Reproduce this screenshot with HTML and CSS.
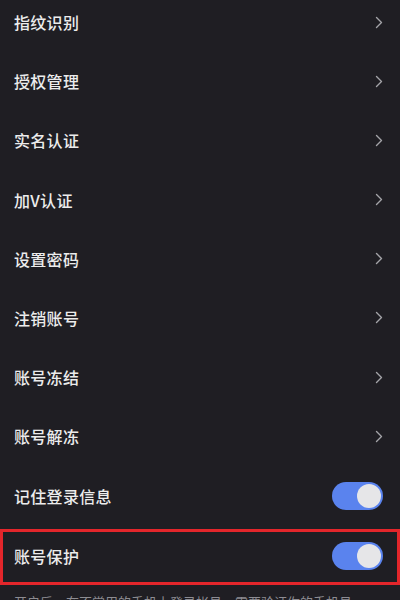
FILE: index.html
```html
<!DOCTYPE html>
<html lang="zh">
<head>
<meta charset="utf-8">
<link rel="stylesheet" href="styles.css">
</head>
<body>
<div class="list">
  <div class="row"><span class="label">指纹识别</span><svg class="chev" viewBox="0 0 8 13"><path d="M1.5 1.5 L6.5 6.5 L1.5 11.5" /></svg></div>
  <div class="row"><span class="label">授权管理</span><svg class="chev" viewBox="0 0 8 13"><path d="M1.5 1.5 L6.5 6.5 L1.5 11.5" /></svg></div>
  <div class="row"><span class="label">实名认证</span><svg class="chev" viewBox="0 0 8 13"><path d="M1.5 1.5 L6.5 6.5 L1.5 11.5" /></svg></div>
  <div class="row"><span class="label">加V认证</span><svg class="chev" viewBox="0 0 8 13"><path d="M1.5 1.5 L6.5 6.5 L1.5 11.5" /></svg></div>
  <div class="row"><span class="label">设置密码</span><svg class="chev" viewBox="0 0 8 13"><path d="M1.5 1.5 L6.5 6.5 L1.5 11.5" /></svg></div>
  <div class="row"><span class="label">注销账号</span><svg class="chev" viewBox="0 0 8 13"><path d="M1.5 1.5 L6.5 6.5 L1.5 11.5" /></svg></div>
  <div class="row"><span class="label">账号冻结</span><svg class="chev" viewBox="0 0 8 13"><path d="M1.5 1.5 L6.5 6.5 L1.5 11.5" /></svg></div>
  <div class="row"><span class="label">账号解冻</span><svg class="chev" viewBox="0 0 8 13"><path d="M1.5 1.5 L6.5 6.5 L1.5 11.5" /></svg></div>
  <div class="row"><span class="label">记住登录信息</span><span class="toggle"><span class="knob"></span></span></div>
  <div class="row highlight"><span class="label">账号保护</span><span class="toggle"><span class="knob"></span></span></div>
  <p class="note">开启后，在不常用的手机上登录帐号，需要验证你的手机号</p>
</div>
</body>
</html>
```
FILE: styles.css
```css
html, body {
  margin: 0;
  padding: 0;
  background: #1f1e23;
  overflow: hidden;
}
body {
  width: 400px;
  height: 600px;
  font-family: "Noto Sans CJK SC", "Noto Sans", sans-serif;
}
.list {
  margin-top: -7.6px;
  display: flex;
  flex-direction: column;
}
.row {
  height: 59.2px;
  box-sizing: border-box;
  display: flex;
  align-items: center;
  justify-content: space-between;
  padding: 0 17px 0 14px;
  flex-shrink: 0;
}
.label {
  color: #ececec;
  font-size: 16px;
  font-weight: 500;
  letter-spacing: 0.3px;
}
.chev {
  width: 8px;
  height: 13px;
  fill: none;
  stroke: #a4a4a8;
  stroke-width: 1.4;
  stroke-linecap: round;
  stroke-linejoin: round;
}
.toggle {
  width: 51px;
  height: 28px;
  border-radius: 14px;
  background: #5a83ee;
  display: flex;
  align-items: center;
  justify-content: flex-end;
  padding: 0 2px;
  box-sizing: border-box;
}
.knob {
  width: 24px;
  height: 24px;
  border-radius: 50%;
  background: #e6e6e8;
}
.highlight {
  margin-top: 3.8px;
  height: 56px;
  border: 3px solid #e3262b;
  padding-left: 11px;
  padding-right: 14px;
  padding-bottom: 2px;
}
.note {
  margin: 0;
  padding: 8px 0 0 14px;
  color: #8d8c92;
  font-size: 13px;
  line-height: 18px;
  white-space: nowrap;
}
```
